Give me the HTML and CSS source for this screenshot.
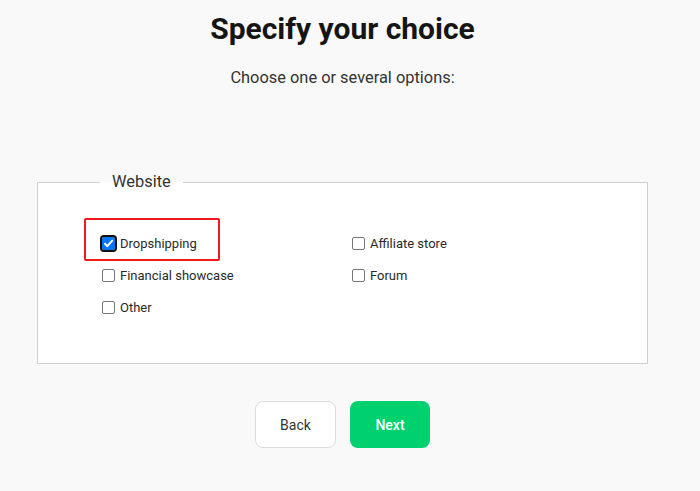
FILE: index.html
```html
<!DOCTYPE html>
<html lang="en">
<head>
<meta charset="utf-8">
<title>Specify your choice</title>
<link rel="stylesheet" href="styles.css">
</head>
<body>
<main class="page">
  <h1 class="title">Specify your choice</h1>
  <p class="subtitle">Choose one or several options:</p>
  <fieldset class="group">
    <legend class="legend">Website</legend>
    <div class="options">
      <label class="option highlighted">
        <span class="box checked"><svg viewBox="0 0 13 13" width="13" height="13"><path d="M3 6.8 L5.4 9.2 L10.2 3.6" fill="none" stroke="#fff" stroke-width="2" stroke-linecap="round" stroke-linejoin="round"/></svg></span>
        <span class="text">Dropshipping</span>
      </label>
      <label class="option"><span class="box"></span><span class="text">Affiliate store</span></label>
      <label class="option"><span class="box"></span><span class="text">Financial showcase</span></label>
      <label class="option"><span class="box"></span><span class="text">Forum</span></label>
      <label class="option"><span class="box"></span><span class="text">Other</span></label>
    </div>
  </fieldset>
  <div class="actions">
    <button class="btn btn-back" type="button">Back</button>
    <button class="btn btn-next" type="button">Next</button>
  </div>
</main>
</body>
</html>
```
FILE: styles.css
```css
html, body {
  margin: 0;
  padding: 0;
  background: #f9f9f9;
}
body {
  font-family: Roboto, "Liberation Sans", sans-serif;
  color: #1b1b1b;
}
.page {
  width: 685px;
  display: flex;
  flex-direction: column;
  align-items: center;
}
.title {
  margin: 9px 0 0;
  font-size: 30px;
  font-weight: 700;
  line-height: 40px;
  color: #151515;
}
.subtitle {
  margin: 19px 0 0;
  font-size: 16.4px;
  line-height: 20px;
  color: #333;
}
.group {
  box-sizing: border-box;
  width: 611px;
  margin: 84px 0 0;
  padding: 44px 0 49px 64px;
  border: 1px solid #cfcfcf;
  background: #fff;
}
.legend {
  margin-left: -2px;
  padding: 0 12px;
  font-size: 16.4px;
  line-height: 20px;
  color: #333;
}
.options {
  display: grid;
  grid-template-columns: 250px 250px;
  row-gap: 18px;
}
.option {
  position: relative;
  display: flex;
  align-items: center;
  gap: 5px;
  height: 14px;
  font-size: 13px;
  color: #2a2a2a;
  justify-self: start;
}
.highlighted::after {
  content: "";
  position: absolute;
  left: -18px;
  right: -23px;
  top: -18px;
  bottom: -11px;
  border: 2px solid #f01818;
  border-radius: 2px;
}
.box {
  box-sizing: border-box;
  width: 13px;
  height: 13px;
  border: 1px solid #767676;
  border-radius: 2px;
  background: #fff;
  display: block;
  flex: none;
}
.box.checked {
  border: none;
  background: #0075ff;
  outline: 2px solid #101010;
  outline-offset: 0;
  border-radius: 2px;
}
.box svg {
  display: block;
}
.actions {
  display: flex;
  gap: 14px;
  margin-top: 37px;
}
.btn {
  box-sizing: border-box;
  height: 47px;
  border-radius: 8px;
  font-family: Roboto, "Liberation Sans", sans-serif;
  font-size: 14px;
  cursor: pointer;
}
.btn-back {
  width: 81px;
  background: #fff;
  border: 1px solid #dcdcdc;
  color: #333;
}
.btn-next {
  width: 80px;
  background: #00d16f;
  border: none;
  color: #fff;
  font-weight: 500;
}
```
